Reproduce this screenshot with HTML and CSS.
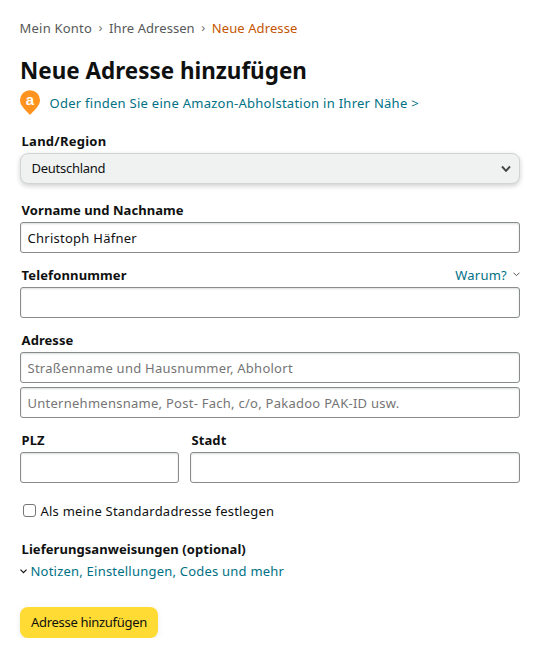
FILE: index.html
```html
<!DOCTYPE html>
<html lang="de">
<head>
<meta charset="utf-8">
<title>Neue Adresse</title>
<link rel="stylesheet" href="styles.css">
</head>
<body>
<nav class="crumbs"><span class="first">Mein Konto</span><span class="sep">›</span><span>Ihre Adressen</span><span class="sep">›</span><span class="current">Neue Adresse</span></nav>
<h1>Neue Adresse hinzufügen</h1>
<div class="pickup">
  <svg class="pin" width="20" height="26" viewBox="0 0 20 26"><path d="M10 .2A10 10 0 0 0 0 10.1C0 15 3.400 18.200 10 25 16.600 18.200 20 15 20 10.100A10 10 0 0 0 10 .2Z" fill="#ff9320"/><text x="10" y="15" text-anchor="middle">a</text></svg>
  <a>Oder finden Sie eine Amazon-Abholstation in Ihrer Nähe &gt;</a>
</div>
<form>
  <div class="field country"><label>Land/Region</label><div class="select"><span>Deutschland</span><svg width="10" height="8" viewBox="0 0 10 8"><path d="M1 1.500 5 5.800 9 1.500" fill="none" stroke="#444" stroke-width="1.900"/></svg></div></div>
  <div class="field"><label>Vorname und Nachname</label><input type="text" value="Christoph Häfner"></div>
  <div class="field"><div class="label-row"><label>Telefonnummer</label><a>Warum?<svg width="7" height="5" viewBox="0 0 7 5"><path d="M.5.7 3.500 3.700 6.500.7" fill="none" stroke="#555"/></svg></a></div><input type="text"></div>
  <div class="field"><label>Adresse</label><input type="text" placeholder="Straßenname und Hausnummer, Abholort"><input class="second" type="text" placeholder="Unternehmensname, Post- Fach, c/o, Pakadoo PAK-ID usw."></div>
  <div class="city-row"><div class="field"><label>PLZ</label><input type="text"></div><div class="field"><label>Stadt</label><input type="text"></div></div>
  <label class="default"><input type="checkbox"><span>Als meine Standardadresse festlegen</span></label>
  <div class="instructions"><strong>Lieferungsanweisungen (optional)</strong><a><svg width="7" height="5" viewBox="0 0 7 5"><path d="M.5.700 3.500 3.700 6.500.700" fill="none" stroke="#111" stroke-width="1.200"/></svg>Notizen, Einstellungen, Codes und mehr</a></div>
  <button type="button">Adresse hinzufügen</button>
</form>
</body>
</html>
```

FILE: styles.css
```css
* { box-sizing: border-box; }
body { margin: 0; padding: 18px 20px 0; background: #fff; color: #0f1111; font: 13px/20px "Noto Sans", sans-serif; letter-spacing: .25px; overflow: hidden; }
a { color: #007185; }
.crumbs { display: flex; height: 20px; margin-left: -.5px; color: #565959; letter-spacing: .06px; }
.crumbs .first { letter-spacing: .22px; }
.sep { width: 17px; text-align: center; line-height: 18px; color: #777; }
.current { color: #c45500; letter-spacing: .1px; }
h1 { width: max-content; margin: 14px 0 0 -.5px; font-size: 24px; line-height: 36px; font-weight: 700; letter-spacing: 0; transform: scaleX(.935); transform-origin: left; }
.pickup { display: flex; gap: 9.500px; height: 28px; margin-top: 1px; align-items: center; }
.pickup a { letter-spacing: .27px; }
.pin { flex: none; }
.pin text { fill: #fff; font: 700 15px "Liberation Sans", sans-serif; letter-spacing: 0; }
form { margin-top: 14px; }
.field { display: flex; flex-direction: column; margin-bottom: 12px; }
.field label, .instructions strong { display: block; height: 20px; padding-left: 1.600px; font-weight: 700; letter-spacing: .06px; }
.field input { width: 100%; height: 31px; margin: 2px 0 0; padding: 0 6.500px; border: 1px solid #888c8c; border-radius: 3px; outline: 0; box-shadow: 0 1px 2px rgba(15,17,17,.15) inset; color: #0f1111; font: inherit; letter-spacing: .26px; }
.field input::placeholder { color: #757575; opacity: 1; }
.field .second { margin-top: 4px; }
.country { margin-bottom: 16px; }
.country label { letter-spacing: .25px; }
.select { display: flex; align-items: center; justify-content: space-between; height: 31px; margin-top: 2px; padding: 0 8px 0 10.500px; border: 1px solid #d0d4d4; border-radius: 8px; background: #f0f2f2; box-shadow: 0 2px 5px rgba(15,17,17,.2); letter-spacing: -.27px; }
.select span { padding-bottom: 2px; }
.label-row { display: flex; justify-content: space-between; }
.label-row label { letter-spacing: .13px; }
.label-row a { display: flex; gap: 6px; }
.label-row svg { margin-top: 7px; }
.city-row { display: grid; grid-template-columns: 159px 330px; gap: 11px; }
.default { display: flex; align-items: center; gap: 4.500px; margin: 6px 0 0 3px; height: 20px; letter-spacing: .22px; }
.default input { appearance: none; width: 13px; height: 13px; margin: 0 0 2px; border: 1px solid #767676; border-radius: 3px; background: #fff; }
.instructions { margin-top: 18px; }
.instructions a { display: flex; align-items: center; gap: 3.500px; height: 20px; margin-top: 2px; letter-spacing: .22px; }
button { display: block; width: 138px; height: 31px; margin-top: 26px; padding: 0 0 2px; border: 0; border-radius: 8px; background: #ffdb33; box-shadow: 0 2px 5px rgba(213,217,217,.5); color: #0f1111; font: inherit; letter-spacing: -.3px; }
```
